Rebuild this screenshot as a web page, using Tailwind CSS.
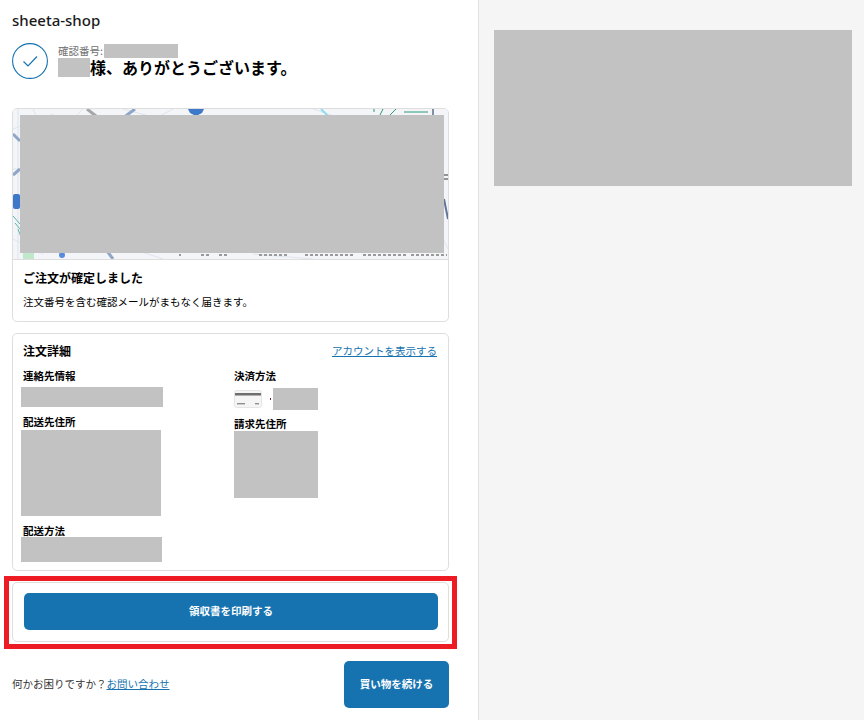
<!doctype html>
<html lang="ja"><head><meta charset="utf-8">
<script src="https://cdn.jsdelivr.net/npm/@tailwindcss/browser@4"></script>
</head>
<body class="bg-white font-['Noto_Sans_CJK_JP','Noto_Sans',sans-serif] text-black">
<div class="flex h-[720px] w-[864px] overflow-hidden">
  <main class="relative w-[479px] shrink-0 border-r border-[#e1e1e1] bg-white pl-3 pr-[29px]">
    <header class="h-[43px] pt-[10px] text-[15px] leading-5 font-['Noto_Sans',sans-serif] font-medium text-[#1a1a1a]">sheeta-shop</header>
    <section class="flex h-[65px] items-start gap-[10px]">
      <svg class="h-9 w-9 shrink-0" viewBox="0 0 36 36" fill="none" stroke="#1773b0"><circle cx="18" cy="18" r="17.4" stroke-width="1.1"/><path d="M11.5 18.5l4.5 4.5 9-9.5" stroke-width="1.2"/></svg>
      <div class="mt-[1px]">
        <div class="flex h-[14px] items-center text-[10.5px] leading-[14px] text-[#707070]"><span class="w-[46px] whitespace-nowrap">確認番号:</span><span class="h-[14px] w-[74px] bg-[#c2c2c2]"></span></div>
        <div class="flex h-[19px] items-center text-[16px] leading-[19px] font-bold"><span class="h-[19px] w-8 bg-[#c2c2c2]"></span>様、ありがとうございます。</div>
      </div>
    </section>

    <section class="relative h-[214px] overflow-hidden rounded-[5px] border border-[#dedede]">
      <div class="h-[151px] border-b border-[#dedede] bg-[#f3f5f8]">
        <svg class="h-[150px] w-[435px]" viewBox="0 0 435 150" fill="none">
          <g stroke="#dfe5ec" stroke-width="1">
            <path d="M0 20l40-15M20 0l30 70M0 95l40-30M0 130l30 15M70 0l-10 10M110 0l30 8M160 0l-15 8M300 0l30 10M430 40l-30 30M420 110l15 30M120 140l30 10M240 145l60 5M0 60h8M5 0v150"/>
          </g>
          <path d="M74 0l9 7" stroke="#a6a6a6" stroke-width="3"/>
          <path d="M110 9l12-9M0 25l7 7M0 66l7-6M100 150l-6-8" stroke="#8fa6c8" stroke-width="3"/>
          <path d="M308 0l8 8" stroke="#8fdcf0" stroke-width="2"/>
          <path d="M175 0h16l-2 4-6 3-6-3z" fill="#3d78c9"/>
          <path d="M361 0v3M370 0l-3 6M383 0l-6 6M391 3h24" stroke="#2e9b6e"/>
          <path d="M420 0v10" stroke="#7f8fa8" stroke-width="2"/>
          <rect x="0" y="85" width="7" height="15" rx="2" fill="#3d78c9"/>
          <path d="M0 107l7 8M2 114l5 6M5 120l3 8" stroke="#5cb5b0"/>
          <rect x="10" y="143" width="11" height="7" fill="#bfe8cb"/>
          <circle cx="49" cy="146" r="3" fill="#5a8ade"/>
          <path d="M430 66h5M430 70h5" stroke="#333"/>
          <path d="M431 90l4 20" stroke="#62749a" stroke-width="2"/>
          <path d="M166 146h2M188 146h8M206 146h10M246 146h30M292 146h50M350 146h45M398 146h36" stroke="#9a9a9a" stroke-width="2" stroke-dasharray="3 2"/>
        </svg>
      </div>
      <div class="absolute left-[7px] top-[6px] h-[138px] w-[424px] bg-[#c2c2c2]"></div>
      <div class="px-[10px] pt-[9px]">
        <h2 class="text-[12px] leading-[18px] font-bold">ご注文が確定しました</h2>
        <p class="mt-[7px] text-[10.5px] leading-[15px]">注文番号を含む確認メールがまもなく届きます。</p>
      </div>
    </section>

    <section class="mt-[11px] h-[238px] rounded-[5px] border border-[#dedede] px-[10px] pt-[7px]">
      <div class="flex h-5 items-center justify-between pr-px">
        <h2 class="text-[12px] leading-5 font-bold">注文詳細</h2>
        <a class="-mt-[1px] text-[10.5px] leading-4 text-[#1773b0] underline" href="#">アカウントを表示する</a>
      </div>
      <div class="mt-[8px] grid grid-cols-[211px_1fr]">
        <div>
          <h3 class="text-[10.5px] leading-[14px] font-bold">連絡先情報</h3>
          <div class="-ml-[2px] mt-[4px] h-5 w-[142px] bg-[#c2c2c2]"></div>
          <h3 class="mt-[8px] text-[10.5px] leading-[14px] font-bold">配送先住所</h3>
          <div class="-ml-[2px] mt-[1px] h-[86px] w-[140px] bg-[#c2c2c2]"></div>
          <h3 class="mt-[8px] text-[10.5px] leading-[14px] font-bold">配送方法</h3>
          <div class="-ml-[2px] -mt-[1px] h-[25px] w-[141px] bg-[#c2c2c2]"></div>
        </div>
        <div>
          <h3 class="text-[10.5px] leading-[14px] font-bold">決済方法</h3>
          <div class="mt-[5px] flex h-[22px] items-center">
            <svg class="h-[18px] w-[28px]" viewBox="0 0 28 18"><rect x=".5" y=".5" width="27" height="17" rx="2" fill="#f5f5f5" stroke="#e6e6e6"/><rect x="1" y="3" width="26" height="2.5" fill="#6e6e6e"/><rect x="3" y="13" width="8" height="1.4" fill="#8f8f8f"/><rect x="21" y="13" width="4" height="1.4" fill="#8f8f8f"/></svg>
            <span class="ml-[8px] h-[2px] w-px bg-[#5a2a3a]"></span>
            <span class="ml-[2px] h-[22px] w-[45px] bg-[#c2c2c2]"></span>
          </div>
          <h3 class="mt-[7px] text-[10.5px] leading-[14px] font-bold">請求先住所</h3>
          <div class="h-[67px] w-[84px] bg-[#c2c2c2]"></div>
        </div>
      </div>
    </section>

    <section class="mt-[11px] h-[60px] rounded-[5px] border border-[#dedede] px-[11px] pt-[10px]">
      <button class="flex h-[37px] w-[414px] items-center justify-center rounded-[5px] bg-[#1773b0] pb-[2px] text-[10.5px] font-bold text-white">領収書を印刷する</button>
    </section>

    <div class="absolute left-1 top-[576px] h-[73px] w-[453px] border-[5px] border-[#ed1c24]"></div>

    <footer class="mt-[19px] flex items-center justify-between">
      <p class="-mt-[1px] text-[10.5px] leading-4 text-[#333]">何かお困りですか？<a class="text-[#1773b0] underline" href="#">お問い合わせ</a></p>
      <button class="flex h-[47px] w-[105px] items-center justify-center rounded-[5px] bg-[#1773b0] pb-[2px] text-[10.5px] font-bold text-white">買い物を続ける</button>
    </footer>
  </main>
  <aside class="flex-1 bg-[#f5f5f5] pl-[15px] pt-[30px]">
    <div class="h-[156px] w-[358px] bg-[#c2c2c2]"></div>
  </aside>
</div>
</body></html>
